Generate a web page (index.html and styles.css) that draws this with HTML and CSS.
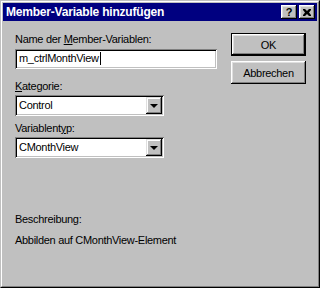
FILE: index.html
```html
<!DOCTYPE html>
<html lang="de">
<head>
    <meta charset="UTF-8">
    <title>Member-Variable hinzufügen</title>
    <link rel="stylesheet" href="styles.css">
</head>
<body>
    <div class="window">
        <div class="frame">
            <div class="titlebar">
                <span class="title">Member-Variable hinzufügen</span>
                <div class="title-buttons">
                    <div class="tbtn help">?</div>
                    <div class="tbtn close">
                        <svg width="8" height="7" viewBox="0 0 8 7">
                            <path d="M0 0h2l2 2 2-2h2v1l-2 2.5 2 2.5v1h-2l-2-2-2 2h-2v-1l2-2.5-2-2.5z" fill="#000"/>
                        </svg>
                    </div>
                </div>
            </div>
            <div class="client">
                <div class="fields">
                    <div class="label">Name der <u>M</u>ember-Variablen:</div>
                    <div class="edit">m_ctrlMonthView<span class="caret"></span></div>

                    <div class="label gap-lg"><u>K</u>ategorie:</div>
                    <div class="combo">
                        <span class="combo-text">Control</span>
                        <span class="drop"><span class="arrow"></span></span>
                    </div>

                    <div class="label gap-md">Variablent<u>y</u>p:</div>
                    <div class="combo">
                        <span class="combo-text">CMonthView</span>
                        <span class="drop"><span class="arrow"></span></span>
                    </div>

                    <div class="label desc-title">Beschreibung:</div>
                    <div class="label desc">Abbilden auf CMonthView-Element</div>
                </div>
                <div class="buttons">
                    <div class="btn default"><span>OK</span></div>
                    <div class="btn">Abbrechen</div>
                </div>
            </div>
        </div>
    </div>
</body>
</html>
```

FILE: styles.css
```css
body { margin: 0; background: #c0c0c0; font-family: "Liberation Sans", Arial, sans-serif; font-size: 11px; letter-spacing: -0.3px; color: #000; }
.window { width: 320px; height: 288px; box-sizing: border-box; border: 1px solid; border-color: #c0c0c0 #000 #000 #c0c0c0; }
.frame { height: 100%; box-sizing: border-box; border: 1px solid; border-color: #fff #808080 #808080 #fff; padding: 1px; }

.titlebar { height: 18px; background: #000080; color: #fff; display: flex; align-items: center; padding-left: 3px; }
.title { font-weight: bold; font-size: 12px; letter-spacing: -0.2px; }
.title-buttons { margin-left: auto; display: flex; gap: 2px; padding-right: 2px; }
.tbtn {
    width: 16px; height: 14px; box-sizing: border-box; background: #c0c0c0; color: #000;
    display: flex; align-items: center; justify-content: center;
    box-shadow: inset -1px -1px #000, inset 1px 1px #fff, inset -2px -2px #808080, inset 2px 2px #dfdfdf;
}
.help { font-weight: bold; font-size: 11px; line-height: 14px; letter-spacing: 0; }

.client { display: flex; padding: 12px 0 0 12px; }
.fields { width: 202px; }
.label { line-height: 13px; white-space: nowrap; }
.gap-lg { margin-top: 11px; }
.gap-md { margin-top: 6px; }
.desc-title { margin-top: 55px; }
.desc { margin-top: 8px; }

.edit {
    height: 20px; margin-top: 3px; box-sizing: border-box; background: #fff;
    padding: 3px 0 0 4px; line-height: 13px;
    box-shadow: inset 1px 1px #808080, inset -1px -1px #fff, inset 2px 2px #000, inset -2px -2px #c0c0c0;
}
.caret { display: inline-block; width: 1px; height: 13px; background: #000; vertical-align: top; margin-left: 1px; }

.combo {
    height: 21px; margin-top: 2px; width: 149px; box-sizing: border-box; background: #fff;
    display: flex; align-items: center; padding: 2px 2px 2px 4px;
    box-shadow: inset 1px 1px #808080, inset -1px -1px #fff, inset 2px 2px #000, inset -2px -2px #c0c0c0;
}
.combo-text { flex: 1; line-height: 13px; }
.drop {
    width: 16px; height: 17px; box-sizing: border-box; background: #c0c0c0;
    display: flex; align-items: center; justify-content: center;
    box-shadow: inset -1px -1px #000, inset 1px 1px #dfdfdf, inset -2px -2px #808080, inset 2px 2px #fff;
}
.arrow { width: 0; height: 0; border-left: 4px solid transparent; border-right: 4px solid transparent; border-top: 4px solid #000; margin-top: 1px; }

.buttons { margin-left: 14px; display: flex; flex-direction: column; gap: 5px; }
.btn {
    width: 75px; height: 23px; box-sizing: border-box; background: #c0c0c0;
    display: flex; align-items: center; justify-content: center;
    box-shadow: inset -1px -1px #000, inset 1px 1px #fff, inset -2px -2px #808080, inset 2px 2px #dfdfdf;
}
.btn.default { border: 1px solid #000; }
```
